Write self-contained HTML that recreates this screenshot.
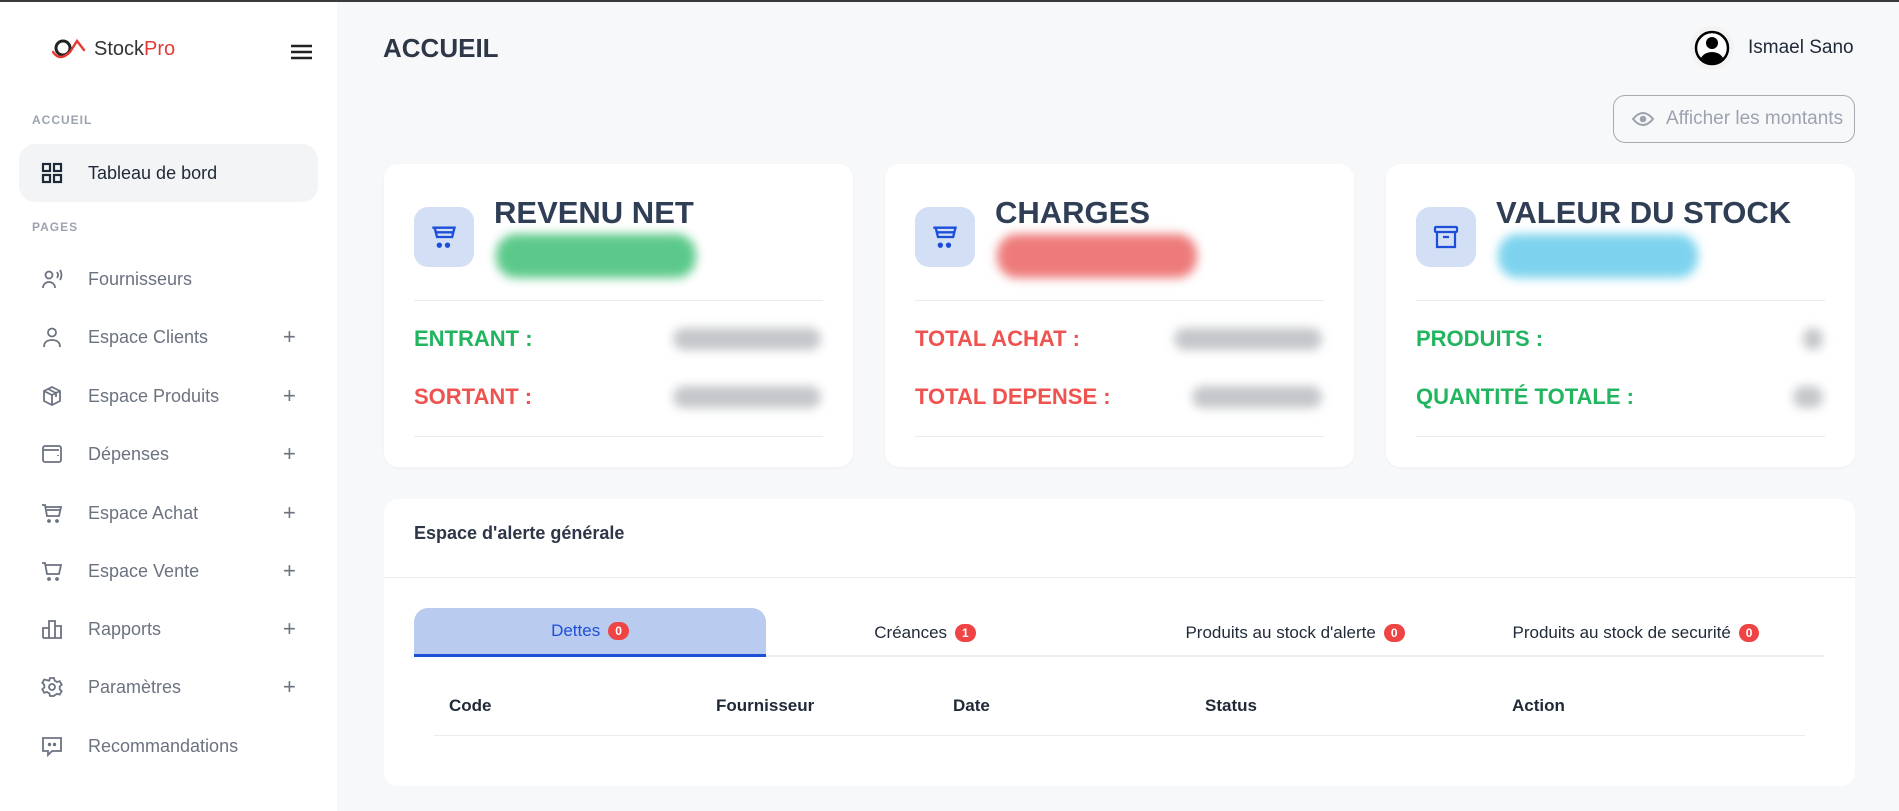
<!DOCTYPE html>
<html><head><meta charset="utf-8"><style>
*{box-sizing:border-box;margin:0;padding:0}
body{width:1899px;height:811px;overflow:hidden;background:#f7f8fa;font-family:"Liberation Sans",Arial,sans-serif;position:relative}
.topline{position:absolute;left:0;top:0;width:1899px;height:2px;background:#3a3a3a;z-index:5}
.side{position:absolute;left:0;top:0;width:337px;height:811px;background:#fff}
.abs{position:absolute}
.lbl{font-size:12px;font-weight:bold;color:#9ca3af;letter-spacing:1px}
.item{position:absolute;left:19px;width:299px;height:58px;display:flex;align-items:center;font-size:18px;color:#6b7280}
.item svg{position:absolute;left:22px;width:22px;height:22px}
.item span{position:absolute;left:69px}
.item .plus{position:absolute;left:264px;font-size:22px;color:#6b7280;font-weight:300}
.card{position:absolute;top:164px;width:469px;height:303px;background:#fff;border-radius:14px;box-shadow:0 1px 3px rgba(0,0,0,.04)}
.ibox{position:absolute;left:30px;top:43px;width:60px;height:60px;background:#d3dff5;border-radius:14px;display:flex;align-items:center;justify-content:center}
.ttl{position:absolute;left:110px;top:31px;font-size:31px;font-weight:bold;color:#2f3e55}
.pill{position:absolute;left:112px;top:70px;height:44px;border-radius:20px;filter:blur(5px)}
.hr{position:absolute;left:30px;right:30px;height:1px;background:#e9ebef}
.k{position:absolute;left:30px;font-size:22px;font-weight:bold}
.v{position:absolute;right:32px;height:22px;border-radius:11px;background:#c4c6ca;filter:blur(5px)}
.g{color:#22b55f}.r{color:#ef5350}
.badge{display:inline-block;background:#ef4444;color:#fff;font-size:12px;font-weight:bold;border-radius:9px;padding:2px 7px;margin-left:8px;vertical-align:middle}
.tab{position:absolute;top:608px;height:49px;width:352px;display:flex;align-items:center;justify-content:center;font-size:17px;color:#1f2937}
.th{position:absolute;top:696px;font-size:17px;font-weight:bold;color:#1f2937}
</style></head><body>
<div class="topline"></div>
<div class="side">
  <div class="abs" style="left:52px;top:36px;display:flex;align-items:center">
    <svg width="36" height="26" viewBox="0 0 36 26"><circle cx="11" cy="12" r="7" fill="none" stroke="#222" stroke-width="3"/><path d="M1 16 Q8 26 18 16 L25 5 L32 14" fill="none" stroke="#e53935" stroke-width="2.4" stroke-linecap="round"/></svg>
    <span style="font-size:20px;color:#333;margin-left:6px;font-weight:500">Stock</span><span style="font-size:20px;color:#e53935">Pro</span>
  </div>
  <svg class="abs" style="left:291px;top:44px" width="21" height="16" viewBox="0 0 21 16"><path d="M0 2H21M0 8H21M0 14H21" stroke="#222" stroke-width="2.4"/></svg>
  <div class="abs lbl" style="left:32px;top:113px">ACCUEIL</div>
  <div class="item" style="top:144px;background:#f3f4f6;border-radius:16px;color:#1f2937"><svg viewBox="0 0 22 22" fill="none" stroke="#1f2937" stroke-width="2.2"><rect x="2" y="2" width="7" height="7"/><rect x="13" y="2" width="7" height="7"/><rect x="2" y="13" width="7" height="7"/><rect x="13" y="13" width="7" height="7"/></svg><span>Tableau de bord</span></div>
  <div class="abs lbl" style="left:32px;top:220px">PAGES</div>
  <div class="item" style="top:250px"><svg viewBox="0 0 22 22" fill="none" stroke="#6b7280" stroke-width="1.8"><circle cx="8" cy="7" r="3.5"/><path d="M2 20c0-4 3-6 6-6s6 2 6 6M16 4q2 3 0 6M19 2q3 5 0 10"/></svg><span>Fournisseurs</span></div>
  <div class="item" style="top:308px"><svg viewBox="0 0 22 22" fill="none" stroke="#6b7280" stroke-width="1.8"><circle cx="11" cy="6.5" r="4"/><path d="M3 21c0-5 3.5-7 8-7s8 2 8 7"/></svg><span>Espace Clients</span><b class="plus">+</b></div>
  <div class="item" style="top:367px"><svg viewBox="0 0 22 22" fill="none" stroke="#6b7280" stroke-width="1.8"><path d="M11 2l8 4v10l-8 4-8-4V6zM3 6l8 4 8-4M11 10v10M7 4l8 4v4"/></svg><span>Espace Produits</span><b class="plus">+</b></div>
  <div class="item" style="top:425px"><svg viewBox="0 0 22 22" fill="none" stroke="#6b7280" stroke-width="1.8"><rect x="2" y="3" width="18" height="16" rx="2"/><path d="M2 7h16M17 12v1"/></svg><span>Dépenses</span><b class="plus">+</b></div>
  <div class="item" style="top:484px"><svg viewBox="0 0 22 22" fill="none" stroke="#6b7280" stroke-width="1.8"><path d="M1 3h3l2 11h12l2-9H5M6 8h13"/><circle cx="8" cy="19" r="1" fill="#6b7280"/><circle cx="16" cy="19" r="1" fill="#6b7280"/></svg><span>Espace Achat</span><b class="plus">+</b></div>
  <div class="item" style="top:542px"><svg viewBox="0 0 22 22" fill="none" stroke="#6b7280" stroke-width="1.8"><path d="M1 3h3l2 11h12l2-9H5"/><circle cx="8" cy="19" r="1" fill="#6b7280"/><circle cx="16" cy="19" r="1" fill="#6b7280"/></svg><span>Espace Vente</span><b class="plus">+</b></div>
  <div class="item" style="top:600px"><svg viewBox="0 0 22 22" fill="none" stroke="#6b7280" stroke-width="1.8"><path d="M2 20V10h6v10M8 20V3h6v17M14 20V8h6v12H2"/></svg><span>Rapports</span><b class="plus">+</b></div>
  <div class="item" style="top:658px"><svg viewBox="0 0 22 22" fill="none" stroke="#6b7280" stroke-width="1.8"><circle cx="11" cy="11" r="3"/><path d="M9 2h4l.7 2.6 2.4 1.4 2.6-.8 2 3.4-2 1.9v2.8l2 1.9-2 3.4-2.6-.8-2.4 1.4L13 20H9l-.7-2.6-2.4-1.4-2.6.8-2-3.4 2-1.9V8.7l-2-1.9 2-3.4 2.6.8L8.3 4.6z"/></svg><span>Paramètres</span><b class="plus">+</b></div>
  <div class="item" style="top:717px"><svg viewBox="0 0 22 22" fill="none" stroke="#6b7280" stroke-width="1.8"><path d="M2 3h18v13H11l-4 4v-4H2z"/><circle cx="8.5" cy="9.5" r=".8" fill="#6b7280"/><circle cx="13.5" cy="9.5" r=".8" fill="#6b7280"/></svg><span>Recommandations</span></div>
</div>

<div class="abs" style="left:383px;top:33px;font-size:26px;font-weight:bold;color:#2d3748">ACCUEIL</div>
<div class="abs" style="left:1690px;top:26px;width:44px;height:44px;border-radius:50%;background:#f3f3f3;display:flex;align-items:center;justify-content:center">
<svg width="36" height="36" viewBox="0 0 36 36"><defs><clipPath id="c"><circle cx="18" cy="18" r="15"/></clipPath></defs><circle cx="18" cy="18" r="16" fill="#fff" stroke="#000" stroke-width="2.5"/><g clip-path="url(#c)"><circle cx="18" cy="13" r="6" fill="#000"/><ellipse cx="18" cy="32" rx="12" ry="10" fill="#000"/></g></svg></div>
<div class="abs" style="left:1748px;top:37px;font-size:19px;color:#1f2937">Ismael Sano</div>
<div class="abs" style="left:1613px;top:95px;width:242px;height:48px;border:1px solid #a9abb3;border-radius:12px;display:flex;align-items:center;padding-left:18px;font-size:19px;color:#9ca3af">
<svg width="22" height="16" viewBox="0 0 22 16" style="margin-right:12px"><path d="M1 8Q11-4 21 8Q11 20 1 8z" fill="none" stroke="#9ca3af" stroke-width="2"/><circle cx="11" cy="8" r="3.3" fill="#9ca3af"/></svg>Afficher les montants</div>

<div class="card" style="left:384px">
  <div class="ibox"><svg width="28" height="28" viewBox="0 0 24 24" fill="none" stroke="#1d4ed8" stroke-width="2"><path d="M2 4h19l-2 8H6L4 4M5 8h15"/><circle cx="8" cy="19" r="1.3" fill="#1d4ed8"/><circle cx="15" cy="19" r="1.3" fill="#1d4ed8"/></svg></div>
  <div class="ttl">REVENU NET</div>
  <div class="pill" style="width:200px;background:#5cc98a"></div>
  <div class="hr" style="top:136px"></div>
  <div class="k g" style="top:162px">ENTRANT :</div><div class="v" style="top:164px;width:148px"></div>
  <div class="k r" style="top:220px">SORTANT :</div><div class="v" style="top:222px;width:148px"></div>
  <div class="hr" style="top:272px"></div>
</div>
<div class="card" style="left:885px">
  <div class="ibox"><svg width="28" height="28" viewBox="0 0 24 24" fill="none" stroke="#1d4ed8" stroke-width="2"><path d="M2 4h19l-2 8H6L4 4M5 8h15"/><circle cx="8" cy="19" r="1.3" fill="#1d4ed8"/><circle cx="15" cy="19" r="1.3" fill="#1d4ed8"/></svg></div>
  <div class="ttl">CHARGES</div>
  <div class="pill" style="width:200px;background:#ee7b7b"></div>
  <div class="hr" style="top:136px"></div>
  <div class="k r" style="top:162px">TOTAL ACHAT :</div><div class="v" style="top:164px;width:148px"></div>
  <div class="k r" style="top:220px">TOTAL DEPENSE :</div><div class="v" style="top:222px;width:130px"></div>
  <div class="hr" style="top:272px"></div>
</div>
<div class="card" style="left:1386px">
  <div class="ibox"><svg width="26" height="26" viewBox="0 0 26 26" fill="none" stroke="#1d4ed8" stroke-width="2.2"><rect x="2" y="3" width="22" height="5" rx="1"/><path d="M4 8v15h18V8M10 13h6"/></svg></div>
  <div class="ttl">VALEUR DU STOCK</div>
  <div class="pill" style="width:200px;background:#7dd3ee"></div>
  <div class="hr" style="top:136px"></div>
  <div class="k g" style="top:162px">PRODUITS :</div><div class="v" style="top:164px;width:20px"></div>
  <div class="k g" style="top:220px">QUANTITÉ TOTALE :</div><div class="v" style="top:222px;width:30px"></div>
  <div class="hr" style="top:272px"></div>
</div>

<div class="abs" style="left:384px;top:499px;width:1471px;height:287px;background:#fff;border-radius:14px"></div>
<div class="abs" style="left:414px;top:523px;font-size:18px;font-weight:bold;color:#2d3748">Espace d'alerte générale</div>
<div class="abs" style="left:384px;top:577px;width:1471px;height:1px;background:#e9ebef"></div>
<div class="abs" style="left:414px;top:655px;width:1410px;height:2px;background:#eceef1"></div>
<div class="tab" style="left:414px;background:#b9cbef;border-radius:14px 14px 0 0;border-bottom:3px solid #1d4ed8;color:#1d4ed8">Dettes<span class="badge">0</span></div>
<div class="tab" style="left:749px">Créances<span class="badge">1</span></div>
<div class="tab" style="left:1119px">Produits au stock d'alerte<span class="badge">0</span></div>
<div class="tab" style="left:1460px">Produits au stock de securité<span class="badge">0</span></div>
<div class="th" style="left:449px">Code</div>
<div class="th" style="left:716px">Fournisseur</div>
<div class="th" style="left:953px">Date</div>
<div class="th" style="left:1205px">Status</div>
<div class="th" style="left:1512px">Action</div>
<div class="abs" style="left:434px;top:735px;width:1371px;height:1px;background:#e9ebef"></div>
</body></html>
